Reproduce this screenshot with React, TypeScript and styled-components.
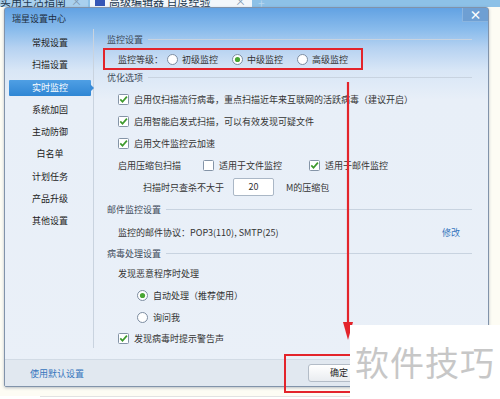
import { FunctionComponent, ReactNode } from "react";
import styled, { createGlobalStyle } from "styled-components";

const GlobalStyle = createGlobalStyle`
    html, body {
        margin: 0;
        padding: 0;
    }

    body {
        font-family: "Noto Sans CJK SC", "Liberation Sans", sans-serif;
        font-size: 9px;
        color: #333333;
    }
`;

const Page = styled.div`
    position: relative;
    width: 500px;
    height: 399px;
    overflow: hidden;
    background-color: #fdfcf4;
`;

const TabStrip = styled.div`
    display: flex;
    align-items: flex-end;
    height: 7px;
    overflow: hidden;
    background-color: #8dc1e7;
`;

const Tab = styled.div<{ active?: boolean; width: number }>`
    display: flex;
    align-items: flex-end;
    justify-content: space-between;
    flex: none;
    width: ${(props) => props.width}px;
    height: 20px;
    padding: 0 6px 0 ${(props) => (props.active ? 5 : 0)}px;
    box-sizing: border-box;
    margin-right: 2px;
    background-color: ${(props) => (props.active ? "#f3f7fb" : "#a9d0ee")};
    color: #22384f;
    font-size: 11px;
    line-height: 11px;
    white-space: nowrap;

    .tab__title {
        display: flex;
        gap: 4px;
    }

    .tab__icon {
        width: 10px;
        height: 10px;
        background-color: #3556b6;
    }

    .tab__close {
        color: #7d97b2;
    }
`;

const NewTab = styled.div`
    margin-left: 4px;
    color: #b6d6ef;
    font-size: 12px;
    line-height: 9px;
`;

const Stage = styled.div`
    display: flex;
    padding-left: 4px;
`;

const Dialog = styled.div`
    display: flex;
    flex-direction: column;
    width: 485px;
    height: 380px;
    box-sizing: border-box;
    border: 1px solid #8193aa;
    border-radius: 3px 3px 2px 2px;
    background: linear-gradient(180deg, #62a2e3 0px, #8abcec 22px, #b6d2f1 40px, #d8e6f6 62px, #e8eff8 92px, #eaf0f8 100%);
    box-shadow: 0 1px 3px rgba(60, 80, 110, 0.35);
    overflow: hidden;
`;

const TitleBar = styled.div`
    display: flex;
    justify-content: space-between;
    align-items: flex-start;
    height: 21px;
    flex: none;

    .title__text {
        padding: 6px 0 0 7px;
        color: #1d2d40;
        line-height: 10px;
    }
`;

const CloseButton = styled.div`
    display: flex;
    align-items: center;
    justify-content: center;
    width: 26px;
    height: 14px;
    box-sizing: border-box;
    border: 1px solid #8ab5e0;
    border-top: none;
    border-right: none;
    background-color: #6e9fd3;
    color: #ffffff;
    font-size: 12px;
    font-weight: bold;
    line-height: 12px;
`;

const Body = styled.div`
    display: flex;
    height: 330px;
    flex: none;
`;

const Nav = styled.div`
    display: flex;
    flex-direction: column;
    width: 88px;
    padding-top: 3px;
    flex: none;
    border-right: 1px solid #c9d3df;
    margin-bottom: 11px;
`;

const NavItem = styled.div<{ selected?: boolean }>`
    position: relative;
    display: flex;
    align-items: center;
    justify-content: center;
    height: 22.25px;
    padding: 0 1px 0 3px;

    span {
        display: block;
        width: 82px;
        height: 16px;
        line-height: 16px;
        text-align: center;
        color: ${(props) => (props.selected ? "#ffffff" : "#222222")};
        background: ${(props) => (props.selected ? "linear-gradient(180deg, #4f9fe4, #2f86d4)" : "transparent")};
        border-radius: 1px;
    }

    &::after {
        content: "";
        display: ${(props) => (props.selected ? "block" : "none")};
        position: absolute;
        right: -1px;
        top: 7px;
        border-top: 4px solid transparent;
        border-bottom: 4px solid transparent;
        border-left: 4px solid #3a8cd8;
    }
`;

const Content = styled.div`
    display: flex;
    flex-direction: column;
    flex: 1;
    padding: 3px 16px 0 13px;
`;

const SectionTitle = styled.div<{ gap?: number }>`
    display: flex;
    align-items: center;
    gap: 5px;
    height: 14px;
    margin-top: ${(props) => props.gap ?? 0}px;
    color: #3d4a5a;
    white-space: nowrap;

    &::after {
        content: "";
        flex: 1;
        height: 1px;
        background-color: #c8d3e0;
    }
`;

const Row = styled.div<{ indent?: number; height?: number; gap?: number }>`
    display: flex;
    align-items: center;
    height: ${(props) => props.height ?? 22}px;
    padding-left: ${(props) => props.indent ?? 11}px;
    margin-top: ${(props) => props.gap ?? 0}px;
    white-space: nowrap;
`;

const LevelRow = styled.div`
    display: flex;
    align-items: center;
    width: 260px;
    height: 22px;
    box-sizing: border-box;
    margin: 2px 0 0 -4px;
    padding-left: 13px;
    border: 2px solid #e3242b;
    white-space: nowrap;
`;

const Option = styled.label<{ spacing?: number; tight?: boolean }>`
    display: flex;
    align-items: center;
    gap: ${(props) => (props.tight ? 4 : 5)}px;
    margin-left: ${(props) => props.spacing ?? 0}px;
`;

const NumberBox = styled.div`
    width: 41px;
    height: 18px;
    margin: 0 12px 0 9px;
    box-sizing: border-box;
    border: 1px solid #aab7c6;
    border-radius: 2px;
    background-color: #ffffff;
    line-height: 16px;
    text-align: center;
`;

const Link = styled.span<{ push?: boolean }>`
    margin-left: ${(props) => (props.push ? "auto" : "0")};
    margin-right: ${(props) => (props.push ? "12px" : "0")};
    color: #3575bd;
`;

const Footer = styled.div`
    display: flex;
    align-items: center;
    flex: 1;
    padding: 0 0 0 25px;
    border-top: 1px solid #d2dbe5;
    background-color: #e1e8f0;
`;

const Button = styled.div`
    width: 62px;
    height: 18px;
    margin-left: 224px;
    box-sizing: border-box;
    border: 1px solid #b3bcc7;
    border-radius: 3px;
    background: linear-gradient(180deg, #ffffff, #e9ecf0);
    color: #222222;
    line-height: 16px;
    text-align: center;
`;

const Below = styled.div`
    height: 12px;
    background-color: #ffffff;

    &::after {
        content: "";
        display: block;
        margin: 9px 0 0 40px;
        width: 310px;
        height: 1px;
        background-color: #e2e2e2;
    }
`;

const RedLine = styled.svg`
    position: absolute;
    left: 340px;
    top: 82px;
`;

const RedFrame = styled.div`
    position: absolute;
    left: 284px;
    top: 354px;
    width: 80px;
    height: 39px;
    box-sizing: border-box;
    border: 2px solid #e3242b;
`;

const Watermark = styled.div`
    position: absolute;
    left: 350px;
    top: 325px;
    width: 150px;
    height: 74px;
    padding: 17px 0 0 5px;
    box-sizing: border-box;
    background-color: #ffffff;
    color: #c7c7c7;
    font-size: 34px;
    line-height: 40px;
    letter-spacing: 1px;
    white-space: nowrap;
`;

const CheckBox: FunctionComponent<{ checked?: boolean }> = ({ checked }) => (
    <svg width="11" height="11" viewBox="0 0 11 11">
        <rect x="0.5" y="0.5" width="10" height="10" rx="1" fill="#ffffff" stroke="#8494a7" />
        {checked && <path d="M2.3 5.4 L4.5 7.8 L8.9 2.6" fill="none" stroke="#3d9a2c" strokeWidth="1.7" />}
    </svg>
);

const Radio: FunctionComponent<{ checked?: boolean }> = ({ checked }) => (
    <svg width="11" height="11" viewBox="0 0 11 11">
        <circle cx="5.5" cy="5.5" r="5" fill="#ffffff" stroke="#7c8ca0" />
        {checked && <circle cx="5.5" cy="5.5" r="2.6" fill="#4aa634" />}
    </svg>
);

const Check: FunctionComponent<{ checked?: boolean; spacing?: number; children: ReactNode }> = ({ checked, spacing, children }) => (
    <Option spacing={spacing}>
        <CheckBox checked={checked} />
        <span>{children}</span>
    </Option>
);

const Choice: FunctionComponent<{ checked?: boolean; spacing?: number; tight?: boolean; children: ReactNode }> = ({ checked, spacing, tight, children }) => (
    <Option spacing={spacing} tight={tight}>
        <Radio checked={checked} />
        <span>{children}</span>
    </Option>
);

const navItems = ["常规设置", "扫描设置", "实时监控", "系统加固", "主动防御", "白名单", "计划任务", "产品升级", "其他设置"];

const App: FunctionComponent = () => (
    <Page>
        <GlobalStyle />
        <TabStrip>
            <Tab width={88}>
                <span className="tab__title">实用生活指南</span>
                <span className="tab__close">×</span>
            </Tab>
            <Tab width={162} active>
                <span className="tab__title"><i className="tab__icon" />高级编辑器 百度经验</span>
                <span className="tab__close">×</span>
            </Tab>
            <NewTab>+</NewTab>
        </TabStrip>
        <Stage>
            <Dialog>
                <TitleBar>
                    <span className="title__text">瑞星设置中心</span>
                    <CloseButton>×</CloseButton>
                </TitleBar>
                <Body>
                    <Nav>
                        {navItems.map((item) => (
                            <NavItem key={item} selected={item === "实时监控"}>
                                <span>{item}</span>
                            </NavItem>
                        ))}
                    </Nav>
                    <Content>
                        <SectionTitle>监控设置</SectionTitle>
                        <LevelRow>
                            <span>监控等级：</span>
                            <Choice tight spacing={4}>初级监控</Choice>
                            <Choice tight checked spacing={14}>中级监控</Choice>
                            <Choice tight spacing={14}>高级监控</Choice>
                        </LevelRow>
                        <SectionTitle>优化选项</SectionTitle>
                        <Row gap={4}><Check checked>启用仅扫描流行病毒，重点扫描近年来互联网的活跃病毒（建议开启）</Check></Row>
                        <Row><Check checked>启用智能启发式扫描，可以有效发现可疑文件</Check></Row>
                        <Row><Check checked>启用文件监控云加速</Check></Row>
                        <Row>
                            <span>启用压缩包扫描</span>
                            <Check spacing={22}>适用于文件监控</Check>
                            <Check checked spacing={27}>适用于邮件监控</Check>
                        </Row>
                        <Row indent={36}>
                            <span>扫描时只查杀不大于</span>
                            <NumberBox>20</NumberBox>
                            <span>M的压缩包</span>
                        </Row>
                        <SectionTitle gap={4}>邮件监控设置</SectionTitle>
                        <Row gap={5}>
                            <span>监控的邮件协议：POP3(110), SMTP(25)</span>
                            <Link push>修改</Link>
                        </Row>
                        <SectionTitle gap={3}>病毒处理设置</SectionTitle>
                        <Row gap={2}>发现恶意程序时处理</Row>
                        <Row indent={30}><Choice checked>自动处理（推荐使用）</Choice></Row>
                        <Row indent={30}><Choice>询问我</Choice></Row>
                        <Row height={20}><Check checked>发现病毒时提示警告声</Check></Row>
                    </Content>
                </Body>
                <Footer>
                    <Link>使用默认设置</Link>
                    <Button>确定</Button>
                </Footer>
            </Dialog>
        </Stage>
        <Below />
        <RedLine width="16" height="262" viewBox="0 0 16 262">
            <path d="M8 0 V246" stroke="#e3242b" strokeWidth="2.2" fill="none" />
            <path d="M3 240 L8 258 L13 240 Z" fill="#e3242b" />
        </RedLine>
        <RedFrame />
        <Watermark>软件技巧</Watermark>
    </Page>
);

export default App;
